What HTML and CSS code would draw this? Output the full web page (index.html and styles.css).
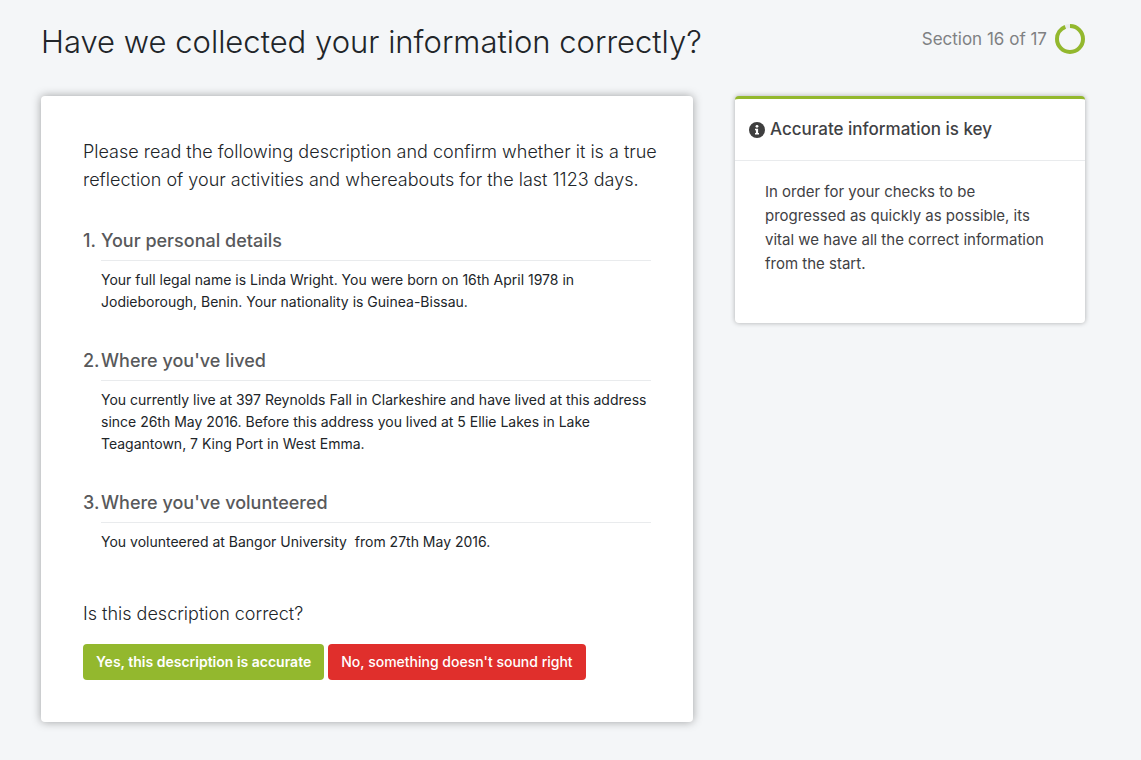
FILE: index.html
```html
<!DOCTYPE html>
<html lang="en">
<head>
<meta charset="utf-8">
<meta name="viewport" content="width=device-width, initial-scale=1">
<title>Have we collected your information correctly?</title>
<link rel="stylesheet" href="styles.css">
</head>
<body>
<div class="page">
  <header class="page-header">
    <h1 class="page-title">Have we collected your information correctly?</h1>
    <div class="progress">
      <span>Section 16 of 17</span>
      <svg class="progress-ring" viewBox="0 0 30 30" aria-hidden="true">
        <circle cx="15" cy="15" r="13" fill="none" stroke="#e9ecee" stroke-width="4"/>
        <circle cx="15" cy="15" r="13" fill="none" stroke="#93b82e" stroke-width="4" pathLength="17" stroke-dasharray="16 1" transform="rotate(-90 15 15)"/>
      </svg>
    </div>
  </header>
  <div class="layout">
    <main class="card">
      <p class="lead">Please read the following description and confirm whether it is a true reflection of your activities and whereabouts for the last 1123 days.</p>
      <ol class="sections">
        <li class="section">
          <span class="number">1.</span>
          <div class="section-body">
            <h2 class="section-title">Your personal details</h2>
            <p class="section-text">Your full legal name is Linda Wright. You were born on 16th April 1978 in Jodieborough, Benin. Your nationality is Guinea-Bissau.</p>
          </div>
        </li>
        <li class="section">
          <span class="number">2.</span>
          <div class="section-body">
            <h2 class="section-title">Where you've lived</h2>
            <p class="section-text">You currently live at 397 Reynolds Fall in Clarkeshire and have lived at this address since 26th May 2016. Before this address you lived at 5 Ellie Lakes in Lake Teagantown, 7 King Port in West Emma.</p>
          </div>
        </li>
        <li class="section">
          <span class="number">3.</span>
          <div class="section-body">
            <h2 class="section-title">Where you've volunteered</h2>
            <p class="section-text">You volunteered at Bangor University&nbsp; from 27th May 2016.</p>
          </div>
        </li>
      </ol>
      <p class="question">Is this description correct?</p>
      <div class="actions">
        <button class="button button-yes" type="button">Yes, this description is accurate</button>
        <button class="button button-no" type="button">No, something doesn't sound right</button>
      </div>
    </main>
    <aside class="tip">
      <h2 class="tip-title">
        <svg class="tip-icon" viewBox="0 0 16 16" aria-hidden="true">
          <circle cx="8" cy="8" r="8" fill="#3f3f3f"/>
          <circle cx="8" cy="4.3" r="1.4" fill="#fff"/>
          <path d="M6 6.7h3.1v4.2H10v1.6H6v-1.6h.9V8.3H6z" fill="#fff"/>
        </svg>
        Accurate information is key
      </h2>
      <p class="tip-text">In order for your checks to be progressed as quickly as possible, its vital we have all the correct information from the start.</p>
    </aside>
  </div>
</div>
</body>
</html>
```
FILE: styles.css
```css
* { box-sizing: border-box; }
body {
  margin: 0;
  background: #f4f6f8;
  color: #212529;
  font-family: Inter, "Liberation Sans", sans-serif;
}
h1, h2, p, ol { margin: 0; padding: 0; }
.page { padding: 23px 56px 38px 41px; }
.page-header {
  display: flex;
  justify-content: space-between;
  align-items: flex-start;
  margin-bottom: 35px;
}
.page-title { font-size: 31px; line-height: 38px; font-weight: 300; }
.progress {
  display: flex;
  align-items: center;
  gap: 8px;
  color: #7f8183;
  font-size: 17px;
  line-height: 32px;
}
.progress-ring { width: 30px; height: 30px; }
.layout {
  display: grid;
  grid-template-columns: minmax(0, 652fr) minmax(0, 350fr);
  gap: 42px;
  align-items: start;
}
.card, .tip { background: #fff; border-radius: 4px; }
.card { padding: 42px 32px 42px 42px; box-shadow: 0 0 10px rgba(0, 0, 0, .35); }
.lead, .question { font-size: 18px; line-height: 28px; font-weight: 300; }
.lead { margin-bottom: 33px; }
.sections { list-style: none; padding-right: 10px; }
.section { display: flex; margin-bottom: 34px; }
.number, .section-title {
  color: #58595b;
  font-size: 18px;
  line-height: 28px;
  font-weight: 500;
}
.number { width: 18px; flex: none; }
.section-body { flex: 1; }
.section-title { padding-bottom: 5px; border-bottom: 1px solid #e9ebed; }
.section-text { padding-top: 8px; font-size: 14px; line-height: 22px; }
.question { padding-top: 13px; margin-bottom: 16px; }
.actions { display: flex; flex-wrap: wrap; gap: 4px; }
.button {
  height: 36px;
  padding: 0 13px;
  border: 0;
  border-radius: 4px;
  color: #fff;
  font: 600 14px/20px Inter, "Liberation Sans", sans-serif;
}
.button-yes { background: #93b82e; }
.button-no { background: #e02f2c; font-weight: 500; }
.tip {
  border-top: 3px solid #93b82e;
  color: #3f4144;
  box-shadow: 0 0 5px rgba(0, 0, 0, .3);
}
.tip-title {
  display: flex;
  align-items: center;
  gap: 5px;
  padding: 18px 14px;
  border-bottom: 1px solid #e9ebed;
  font-size: 17px;
  line-height: 25px;
  font-weight: 500;
}
.tip-icon { width: 16px; height: 16px; flex: none; }
.tip-text { padding: 19px 30px 47px; font-size: 15px; line-height: 24px; }
```
